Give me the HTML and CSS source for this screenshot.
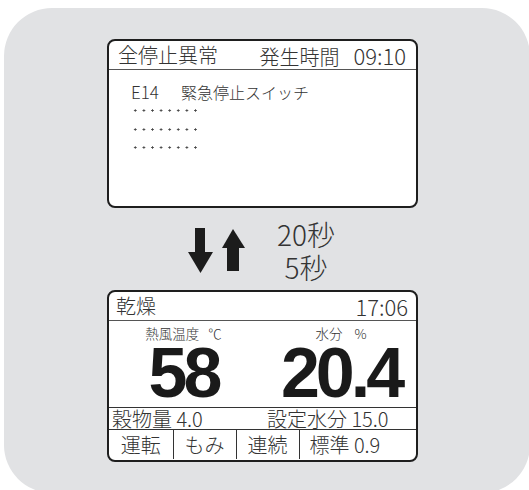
FILE: index.html
```html
<!DOCTYPE html>
<html lang="ja">
<head>
    <meta charset="UTF-8">
    <meta name="viewport" content="width=device-width, initial-scale=1.0">
    <title>乾燥機 表示切替</title>
    <link rel="stylesheet" href="styles.css">
</head>
<body>
    <div class="panel">
        <div class="screen screen-alarm">
            <div class="screen-head head-alarm">
                <span>全停止異常</span>
                <span>発生時間<span class="clock clock-gap">09:10</span></span>
            </div>
            <div class="alarm-body">
                <p class="alarm-line"><span class="code">E14</span>緊急停止スイッチ</p>
                <div class="dots"></div>
                <div class="dots"></div>
                <div class="dots"></div>
            </div>
        </div>

        <div class="swap">
            <svg class="swap-icon" width="58" height="45" viewBox="0 0 58 45">
                <rect x="7" y="0" width="10" height="25" fill="#1c1c1c"/>
                <polygon points="0,24 25,24 12.5,45" fill="#1c1c1c"/>
                <polygon points="45,1 34,20 57,20" fill="#1c1c1c"/>
                <rect x="39" y="19" width="12" height="24" fill="#1c1c1c"/>
            </svg>
            <div class="swap-times">
                <div>20秒</div>
                <div>5秒</div>
            </div>
        </div>

        <div class="screen screen-dry">
            <div class="screen-head head-dry">
                <span>乾燥</span>
                <span class="clock">17:06</span>
            </div>
            <div class="readings">
                <div class="reading">
                    <div class="reading-label">熱風温度&nbsp;&nbsp;&nbsp;℃</div>
                    <div class="reading-value">58</div>
                </div>
                <div class="reading reading-right">
                    <div class="reading-label">水分&nbsp;&nbsp;&nbsp;&nbsp;%</div>
                    <div class="reading-value">20.4</div>
                </div>
            </div>
            <div class="info-row">
                <span class="info-left">穀物量 4.0</span>
                <span>設定水分 15.0</span>
            </div>
            <div class="mode-row">
                <div class="mode">運転</div>
                <div class="mode">もみ</div>
                <div class="mode">連続</div>
                <div class="mode mode-wide">標準 0.9</div>
            </div>
        </div>
    </div>
</body>
</html>
```

FILE: styles.css
```css
body {
    margin: 0;
    background: #fff;
    overflow: hidden;
    font-family: "Noto Sans CJK JP", sans-serif;
    font-weight: 300;
    color: #333;
}

.panel {
    margin: 8px 0 0 4px;
    width: 526px;
    height: 485px;
    box-sizing: border-box;
    padding: 31px 0 0 103px;
    border-radius: 48px;
    background: #e1e2e4;
}

.screen {
    width: 311px;
    box-sizing: border-box;
    border: 2.5px solid #1e1e1e;
    border-radius: 8px;
    background: #fff;
    overflow: hidden;
}

.screen-alarm {
    height: 169px;
}

.screen-dry {
    height: 172px;
}

.screen-head {
    display: flex;
    justify-content: space-between;
    height: 28px;
    line-height: 28px;
    font-size: 20px;
    border-bottom: 1px solid #555;
}

.clock {
    font-size: 22px;
}

.clock-gap {
    margin-left: 14px;
}

.head-alarm {
    padding: 0 10px 0 9px;
}

.head-dry {
    padding: 0 8px 0 7px;
}

.alarm-body {
    padding: 12px 0 0 22px;
}

.alarm-line {
    margin: 0 0 7px;
    font-size: 16px;
    line-height: 20px;
}

.code {
    display: inline-block;
    width: 50px;
    font-size: 17px;
}

.dots {
    width: 69px;
    height: 3px;
    margin-bottom: 15.5px;
    background: radial-gradient(circle, #444 0.9px, transparent 1.3px);
    background-size: 8.6px 3px;
}

/* arrows + switch timing */
.swap {
    display: flex;
    align-items: flex-start;
    height: 70px;
    margin-top: 12px;
    padding-left: 81px;
}

.swap-icon {
    display: block;
    margin-top: 8px;
}

.swap-times {
    width: 64px;
    margin-left: 28px;
    margin-top: -2px;
    text-align: center;
    font-size: 28px;
    line-height: 33px;
}

.readings {
    display: grid;
    grid-template-columns: 149px 1fr;
    height: 86px;
    border-bottom: 1px solid #333;
}

.reading {
    text-align: center;
}

.reading-right {
    padding-left: 8px;
}

.reading-label {
    padding-top: 3px;
    font-size: 13.5px;
    line-height: 18px;
}

.reading-value {
    font-family: "Liberation Sans", sans-serif;
    font-size: 70px;
    font-weight: bold;
    line-height: 62px;
    letter-spacing: -4px;
    color: #1a1a1a;
}

.info-row {
    display: flex;
    height: 21px;
    line-height: 21px;
    font-size: 20px;
    padding-left: 3px;
    border-bottom: 1px solid #333;
}

.info-left {
    width: 155px;
}

.mode-row {
    display: grid;
    grid-template-columns: 63.5px 63px 63px 1fr;
    height: 29px;
    line-height: 29px;
    font-size: 20px;
}

.mode {
    text-align: center;
    border-left: 1px solid #333;
}

.mode:first-child {
    border-left: none;
}

.mode-wide {
    text-align: left;
    padding-left: 10px;
}
```
